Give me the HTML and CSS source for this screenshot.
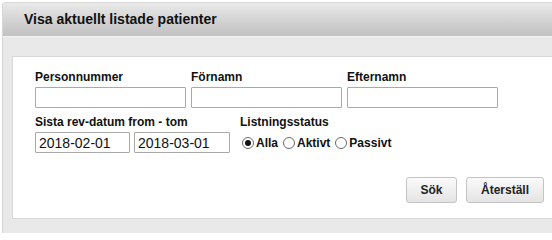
FILE: index.html
```html
<!DOCTYPE html>
<html lang="sv">
<head>
<meta charset="utf-8">
<title>Visa aktuellt listade patienter</title>
<link rel="stylesheet" href="styles.css">
</head>
<body>
<div class="panel">
  <div class="panel-header">Visa aktuellt listade patienter</div>
  <div class="panel-body">
    <form class="search-box">
      <div class="row">
        <div class="field">
          <label class="lbl">Personnummer</label>
          <input class="txt wide" type="text">
        </div>
        <div class="field">
          <label class="lbl">Förnamn</label>
          <input class="txt wide" type="text">
        </div>
        <div class="field">
          <label class="lbl">Efternamn</label>
          <input class="txt wide" type="text">
        </div>
      </div>
      <div class="row row2">
        <div class="field">
          <label class="lbl">Sista rev-datum from - tom</label>
          <div class="dates">
            <input class="txt date1" type="text" value="2018-02-01">
            <input class="txt date2" type="text" value="2018-03-01">
          </div>
        </div>
        <div class="field status">
          <label class="lbl">Listningsstatus</label>
          <div class="radios">
            <label class="opt"><input class="rad" type="radio" name="st" checked>Alla</label>
            <label class="opt"><input class="rad" type="radio" name="st">Aktivt</label>
            <label class="opt"><input class="rad" type="radio" name="st">Passivt</label>
          </div>
        </div>
      </div>
      <div class="actions">
        <button type="button" class="btn btn-sok">Sök</button>
        <button type="button" class="btn btn-reset">Återställ</button>
      </div>
    </form>
  </div>
</div>
</body>
</html>
```
FILE: styles.css
```css
html, body {
  margin: 0;
  padding: 0;
  background: #ffffff;
  font-family: "Liberation Sans", Arial, sans-serif;
  color: #111;
}
.panel {
  margin: 2px 0 0 2px;
  border-left: 1px solid #d6d6d6;
  border-top: 1px solid #dcdcdc;
  border-top-left-radius: 4px;
  overflow: hidden;
  background: #e9e9e9;
  height: 230px;
}
.panel-header {
  height: 32px;
  line-height: 32px;
  padding-left: 21px;
  font-size: 14px;
  font-weight: bold;
  color: #111;
  background: linear-gradient(#e9e9e9, #cdcdcd 70%, #c3c3c3);
  border-bottom: 1px solid #c0c0c0;
}
.panel-body {
  border-top: 1px solid #f4f4f4;
  padding: 19px 0 0 9px;
}
.search-box {
  margin: 0;
  background: #fff;
  border: 1px solid #d9d9d9;
  border-right: none;
  padding: 13px 0 18px 22px;
  height: 130px;
}
.row {
  display: flex;
  gap: 5px;
}
.row2 {
  margin-top: 7px;
  gap: 10px;
}
.field {
  display: flex;
  flex-direction: column;
}
.lbl {
  font-size: 12px;
  font-weight: bold;
  line-height: 14px;
  height: 17px;
  color: #111;
}
.txt {
  box-sizing: border-box;
  height: 21px;
  margin: 0;
  border: 1px solid #a9a9a9;
  border-radius: 1px;
  padding: 1px 3px;
  font-family: "Liberation Sans", Arial, sans-serif;
  font-size: 14px;
  color: #111;
  background: #fff;
}
.wide {
  width: 151px;
}
.dates {
  display: flex;
  gap: 4px;
}
.date1 {
  width: 95px;
}
.date2 {
  width: 96px;
}
.radios {
  display: flex;
  align-items: center;
  height: 21px;
  gap: 3px;
}
.opt {
  display: flex;
  align-items: center;
  font-size: 12px;
  font-weight: bold;
  gap: 2px;
}
.rad {
  appearance: none;
  -webkit-appearance: none;
  box-sizing: border-box;
  width: 12px;
  height: 12px;
  margin: 0 0 0 2px;
  border: 1px solid #6a6a6a;
  border-radius: 50%;
  background: #fff;
  display: grid;
  place-content: center;
}
.rad:checked::before {
  content: "";
  width: 6px;
  height: 6px;
  border-radius: 50%;
  background: #111;
}
.actions {
  display: flex;
  justify-content: flex-end;
  gap: 9px;
  margin-top: 24px;
  padding-right: 8px;
}
.btn {
  box-sizing: border-box;
  height: 26px;
  border: 1px solid #c4c4c4;
  border-radius: 3px;
  background: linear-gradient(#fafafa, #e4e4e4);
  font-family: "Liberation Sans", Arial, sans-serif;
  font-size: 12px;
  font-weight: bold;
  color: #222;
  padding: 0;
}
.btn-sok {
  width: 51px;
}
.btn-reset {
  width: 78px;
}
```
